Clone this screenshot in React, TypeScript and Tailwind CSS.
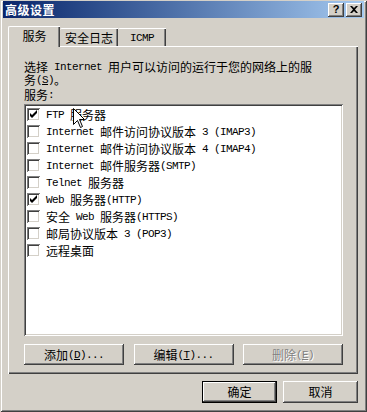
import React from "react";

const CJK_RE = /[\u2E80-\u9FFF\u3000-\u303F\uFF00-\uFFEF]/;

function T({ s }: { s: string }) {
  const parts = s.split(/([\u2E80-\u9FFF\u3000-\u303F\uFF00-\uFFEF]+)/).filter(Boolean);
  return (
    <>
      {parts.map((p, i) =>
        CJK_RE.test(p) ? (
          <span key={i} className="inline-block h-[12px] leading-[12px] align-top font-['Noto_Sans_CJK_SC',sans-serif] text-[12px]">
            {p}
          </span>
        ) : (
          <span key={i} className="inline-block h-[12px] leading-[12px] align-top font-['Liberation_Mono',monospace] text-[11px] tracking-[-0.6px] whitespace-pre">
            {p}
          </span>
        )
      )}
    </>
  );
}

function U({ c }: { c: string }) {
  return (
    <span className="inline-block h-[12px] leading-[12px] align-top font-['Liberation_Mono',monospace] text-[11px] tracking-[-0.6px] underline underline-offset-1">{c}</span>
  );
}

function CheckBox({ checked }: { checked: boolean }) {
  return (
    <div className="w-[13px] h-[13px] bg-white shrink-0 shadow-[inset_1px_1px_#808080,inset_-1px_-1px_#ffffff,inset_2px_2px_#404040,inset_-2px_-2px_#d4d0c8] flex items-center justify-center">
      {checked && (
        <svg width="13" height="13" viewBox="0 0 13 13">
          <path d="M3 5 L3 8 L5 10 L10 5 L10 2 L5 7 Z" fill="#000" />
        </svg>
      )}
    </div>
  );
}

const raised =
  "shadow-[inset_-1px_-1px_#404040,inset_1px_1px_#ffffff,inset_-2px_-2px_#808080,inset_2px_2px_#d4d0c8]";

const items: { label: string; checked: boolean }[] = [
  { label: "FTP 服务器", checked: true },
  { label: "Internet 邮件访问协议版本 3 (IMAP3)", checked: false },
  { label: "Internet 邮件访问协议版本 4 (IMAP4)", checked: false },
  { label: "Internet 邮件服务器(SMTP)", checked: false },
  { label: "Telnet 服务器", checked: false },
  { label: "Web 服务器(HTTP)", checked: true },
  { label: "安全 Web 服务器(HTTPS)", checked: false },
  { label: "邮局协议版本 3 (POP3)", checked: false },
  { label: "远程桌面", checked: false },
];

export default function App() {
  return (
    <div className="relative w-[367px] h-[412px] bg-[#d4d0c8] pt-[1px] px-[3px] text-black shadow-[inset_1px_1px_#d4d0c8,inset_-1px_-1px_#404040,inset_2px_2px_#ffffff,inset_-2px_-2px_#808080] overflow-hidden">
      {/* Title bar */}
      <div className="h-[17px] bg-gradient-to-r from-[#0a246a] to-[#a6caf0] flex items-center pl-[2px] pr-[2px]">
        <span className="text-white font-bold text-[12px] tracking-[0.5px] font-['Noto_Sans_CJK_SC',sans-serif] leading-none">
          高级设置
        </span>
        <div className="ml-auto flex items-center gap-[2px]">
          <div className={`w-[16px] h-[14px] bg-[#d4d0c8] ${raised} flex items-center justify-center text-[11px] font-bold font-['Liberation_Sans',sans-serif] leading-none`}>
            ?
          </div>
          <div className={`w-[16px] h-[14px] bg-[#d4d0c8] ${raised} flex items-center justify-center`}>
            <svg width="8" height="7" viewBox="0 0 8 7">
              <path d="M0 0 L2 0 L4 2 L6 0 L8 0 L5 3.5 L8 7 L6 7 L4 5 L2 7 L0 7 L3 3.5 Z" fill="#000" />
            </svg>
          </div>
        </div>
      </div>

      {/* Tabs */}
      <div className="mt-[8px] ml-[5px] h-[20px] flex items-end relative z-10">
        <div className="w-[52px] h-[21px] -mb-px bg-[#d4d0c8] border-l border-t border-white rounded-tl-[2px] shadow-[inset_-1px_0_#404040,inset_-2px_0_#808080] flex items-center justify-center pb-[2px]">
          <T s="服务" />
        </div>
        <div className="w-[58px] h-[18px] bg-[#d4d0c8] border-t border-white rounded-tl-[2px] shadow-[inset_-1px_0_#404040,inset_-2px_0_#808080] flex items-center justify-center">
          <T s="安全日志" />
        </div>
        <div className="w-[48px] h-[18px] bg-[#d4d0c8] border-t border-white rounded-tl-[2px] shadow-[inset_-1px_0_#404040,inset_-2px_0_#808080] flex items-center justify-center">
          <T s="ICMP" />
        </div>
      </div>

      {/* Panel */}
      <div className="ml-[5px] w-[350px] h-[328px] bg-[#d4d0c8] border-l border-t border-white shadow-[inset_-1px_-1px_#404040,inset_-2px_-2px_#808080] pl-[15px] pt-[14px] flex flex-col">
        <div className="leading-[12px]">
          <div className="h-[13px] whitespace-nowrap">
            <T s="选择 Internet 用户可以访问的运行于您的网络上的服" />
          </div>
          <div className="h-[13px] whitespace-nowrap">
            <T s="务(" />
            <U c="S" />
            <T s=")。" />
          </div>
          <div className="h-[12px] mt-[2px] whitespace-nowrap">
            <T s="服务:" />
          </div>
        </div>

        {/* List box */}
        <div className="relative mt-[3px] w-[319px] h-[232px] bg-white shadow-[inset_1px_1px_#808080,inset_-1px_-1px_#ffffff,inset_2px_2px_#404040,inset_-2px_-2px_#d4d0c8] pt-[2px] pl-[3px]">
          {items.map((it) => (
            <div key={it.label} className="h-[17px] flex items-center gap-[6px] leading-[12px] whitespace-nowrap">
              <CheckBox checked={it.checked} />
              <div className="h-[12px]">
                <T s={it.label} />
              </div>
            </div>
          ))}
          {/* mouse cursor */}
          <svg className="absolute left-[49px] top-[4px]" width="12" height="20" viewBox="0 0 12 20">
            <path d="M0.5 0.5 L0.5 16.5 L4.5 12.5 L7.5 19.5 L9.5 18.5 L6.5 11.5 L11.5 11.5 Z" fill="#fff" stroke="#000" strokeWidth="1" />
          </svg>
        </div>

        {/* Buttons */}
        <div className="mt-[8px] w-[319px] flex justify-between leading-[12px]">
          <div className={`w-[100px] h-[21px] ${raised} flex items-center justify-center whitespace-nowrap`}>
            <T s="添加(" />
            <U c="D" />
            <T s=")..." />
          </div>
          <div className={`w-[100px] h-[21px] ${raised} flex items-center justify-center whitespace-nowrap`}>
            <T s="编辑(" />
            <U c="T" />
            <T s=")..." />
          </div>
          <div className={`w-[100px] h-[21px] ${raised} flex items-center justify-center whitespace-nowrap text-[#808080] [text-shadow:1px_1px_0_#ffffff]`}>
            <T s="删除(" />
            <U c="E" />
            <T s=")" />
          </div>
        </div>
      </div>

      {/* Bottom buttons */}
      <div className="mt-[7px] flex justify-end gap-[6px] pr-[6px] leading-[12px]">
        <div className="w-[75px] h-[22px] border border-black flex">
          <div className={`flex-1 ${raised} flex items-center justify-center`}>
            <T s="确定" />
          </div>
        </div>
        <div className={`w-[75px] h-[22px] ${raised} flex items-center justify-center`}>
          <T s="取消" />
        </div>
      </div>
    </div>
  );
}
